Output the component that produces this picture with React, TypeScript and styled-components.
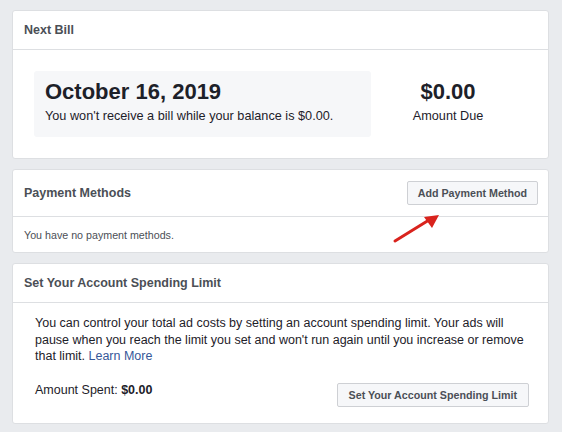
import { createGlobalStyle, styled } from "styled-components";

const GlobalStyle = createGlobalStyle`
  html, body {
    margin: 0;
    padding: 0;
    background: #e9ebee;
  }
  body {
    font-family: "Liberation Sans", Arial, sans-serif;
    color: #1d2129;
  }
`;

const Page = styled.div`
  display: flex;
  flex-direction: column;
  gap: 10px;
  padding: 10px 13px 9px 12px;
  width: 562px;
  height: 432px;
  box-sizing: border-box;
`;

const Card = styled.section`
  position: relative;
  background: #fff;
  border: 1px solid #dddfe2;
  border-radius: 3px;
`;

const CardHeader = styled.div<{ $height: number }>`
  display: flex;
  align-items: center;
  justify-content: space-between;
  height: ${(p) => p.$height}px;
  padding: 0 10px 0 11px;
  border-bottom: 1px solid #dddfe2;
`;

const CardTitle = styled.h2`
  margin: 0;
  font-size: 12.5px;
  line-height: 16px;
  font-weight: bold;
  color: #4b4f56;
`;

const BillBody = styled.div`
  display: grid;
  grid-template-columns: 337px 1fr;
  padding: 21px 23px 21px 21px;
`;

const BillBox = styled.div<{ $shaded?: boolean }>`
  display: flex;
  flex-direction: column;
  align-items: ${(p) => (p.$shaded ? "flex-start" : "center")};
  height: 66px;
  box-sizing: border-box;
  padding: 8px 11px 0;
  background: ${(p) => (p.$shaded ? "#f6f7f9" : "transparent")};
  border-radius: 3px;
`;

const BigValue = styled.div`
  font-size: 22px;
  line-height: 26px;
  font-weight: bold;
  color: #1d2129;
  margin-bottom: 3px;
`;

const SmallText = styled.div`
  font-size: 12.7px;
  line-height: 16px;
  color: #1d2129;
`;

const Button = styled.button`
  height: 24px;
  padding: 0 10px;
  border: 1px solid #ced0d4;
  border-radius: 2px;
  background: #f6f7f9;
  color: #4b4f56;
  font-family: "Liberation Sans", Arial, sans-serif;
  font-size: 10.7px;
  font-weight: bold;
  cursor: pointer;
  white-space: nowrap;
`;

const EmptyBody = styled.div`
  display: flex;
  align-items: center;
  height: 35px;
  padding: 0 11px;
  font-size: 10.7px;
  color: #4b4f56;
`;

const LimitBody = styled.div`
  padding: 12px 19px 16px 22px;
`;

const Paragraph = styled.p`
  margin: 0;
  font-size: 12.5px;
  line-height: 16.5px;
  color: #1d2129;
`;

const Link = styled.a`
  color: #365899;
  text-decoration: none;
`;

const SpentRow = styled.div`
  display: flex;
  justify-content: space-between;
  align-items: flex-start;
  margin-top: 17px;

  ${Button} {
    margin-top: 1px;
    padding: 0 11px;
  }
`;

const Arrow = styled.svg`
  position: absolute;
  left: 378px;
  top: 41px;
`;

export default function App() {
  return (
    <>
      <GlobalStyle />
      <Page>
        <Card>
          <CardHeader $height={38}>
            <CardTitle>Next Bill</CardTitle>
          </CardHeader>
          <BillBody>
            <BillBox $shaded>
              <BigValue>October 16, 2019</BigValue>
              <SmallText>You won't receive a bill while your balance is $0.00.</SmallText>
            </BillBox>
            <BillBox>
              <BigValue>$0.00</BigValue>
              <SmallText>Amount Due</SmallText>
            </BillBox>
          </BillBody>
        </Card>

        <Card>
          <CardHeader $height={46}>
            <CardTitle>Payment Methods</CardTitle>
            <Button>Add Payment Method</Button>
          </CardHeader>
          <EmptyBody>You have no payment methods.</EmptyBody>
          <Arrow width="52" height="34" viewBox="0 0 52 34">
            <line x1="4" y1="30" x2="38" y2="9" stroke="#d9231d" strokeWidth="3" strokeLinecap="round" />
            <polygon points="48,4 33,6 41,17" fill="#d9231d" />
          </Arrow>
        </Card>

        <Card>
          <CardHeader $height={38}>
            <CardTitle>Set Your Account Spending Limit</CardTitle>
          </CardHeader>
          <LimitBody>
            <Paragraph>
              You can control your total ad costs by setting an account spending limit. Your ads will
              pause when you reach the limit you set and won't run again until you increase or remove
              that limit. <Link href="#">Learn More</Link>
            </Paragraph>
            <SpentRow>
              <Paragraph>
                Amount Spent: <b>$0.00</b>
              </Paragraph>
              <Button>Set Your Account Spending Limit</Button>
            </SpentRow>
          </LimitBody>
        </Card>
      </Page>
    </>
  );
}
